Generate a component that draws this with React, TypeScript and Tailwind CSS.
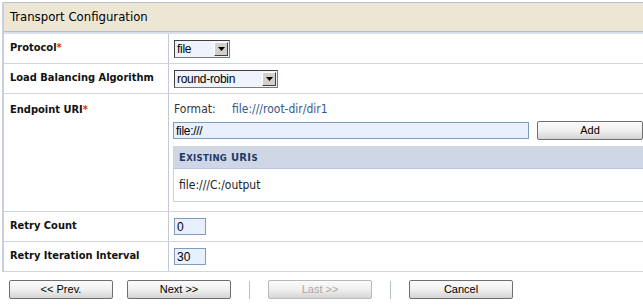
import React from "react";

const labelFont = { fontFamily: "'DejaVu Sans Condensed', 'DejaVu Sans', Tahoma, sans-serif", fontStretch: "condensed" as const };
const plainFont = { fontFamily: "'DejaVu Sans', Tahoma, sans-serif" };
const arial = { fontFamily: "'Liberation Sans', Arial, sans-serif" };

function Select({ value, width }: { value: string; width: string }) {
  return (
    <div
      className={`flex items-center h-[18px] ${width} border border-[#7a7a7a] border-t-[#404040] border-l-[#404040] bg-[#eef3fc]`}
    >
      <span className="flex-1 pl-[2px] text-[12px] leading-none text-black tracking-[-0.3px]" style={arial}>
        {value}
      </span>
      <span className="w-[14px] h-[14px] mr-[1px] bg-[#d4d0c8] border border-[#ffffff] border-r-[#404040] border-b-[#404040] flex items-center justify-center">
        <svg width="7" height="4" viewBox="0 0 7 4">
          <polygon points="0,0 7,0 3.5,4" fill="#000" />
        </svg>
      </span>
    </div>
  );
}

function Btn({ children, disabled, width = "w-[104px]" }: { children: React.ReactNode; disabled?: boolean; width?: string }) {
  return (
    <div
      className={`${width} h-[19px] flex items-center justify-center rounded-[2px] border text-[11px] bg-gradient-to-b from-[#fbfbfb] via-[#f0f0f0] to-[#d4d4d4] ${
        disabled ? "border-[#b8b8b8] text-[#a8a8a8]" : "border-[#6f6f6f] text-black"
      }`}
      style={arial}
    >
      {children}
    </div>
  );
}

function Row({ label, req, children, h, alignTop }: { label: string; req?: boolean; children: React.ReactNode; h: string; alignTop?: boolean }) {
  return (
    <div className={`flex ${h} border-b border-[#cfd6d8]`}>
      <div className={`w-[165px] shrink-0 border-r border-[#c3cad6] pl-[6px] flex ${alignTop ? "items-start pt-[8px]" : "items-center"}`}>
        <span className="text-[11px] font-bold text-[#111] whitespace-nowrap" style={labelFont}>
          {label}
          {req && <span className="text-[#e0301e]">*</span>}
        </span>
      </div>
      <div className="flex-1 min-w-0">{children}</div>
    </div>
  );
}

export default function App() {
  return (
    <div className="w-[643px] h-[305px] bg-white overflow-hidden relative">
      <div className="ml-[2px] mt-[2px] border-l-2 border-[#c9d0dc]">
        <div className="h-[29px] bg-[#ede6d5] border-t border-[#b8bfcc] flex items-center pl-[6px]">
          <span className="text-[13px] text-black" style={labelFont}>
            Transport Configuration
          </span>
        </div>
        <div className="h-[3px] border-t border-[#b3bbcd] bg-[#d8deea]" />
        <Row label="Protocol" req h="h-[30px]">
          <div className="h-full flex items-center pl-[5px]">
            <Select value="file" width="w-[56px]" />
          </div>
        </Row>
        <Row label="Load Balancing Algorithm" h="h-[30px]">
          <div className="h-full flex items-center pl-[5px]">
            <Select value="round-robin" width="w-[104px]" />
          </div>
        </Row>
        <Row label="Endpoint URI" req h="h-[118px]" alignTop>
          <div className="pl-[4px] pt-[7px]">
            <div className="flex items-center h-[16px] text-[12px]" style={labelFont}>
              <span className="pl-[1px] w-[59px] text-[#333]">Format:</span>
              <span className="text-[#34598a]">file:///root-dir/dir1</span>
            </div>
            <div className="flex items-center mt-[4px]">
              <div className="w-[357px] h-[17px] border border-[#7f9db9] bg-[#e8f0fd] flex items-center pl-[2px] text-[12px] tracking-[-0.3px]" style={arial}>
                file:///
              </div>
              <div className="ml-[8px]">
                <Btn width="w-[106px]">Add</Btn>
              </div>
            </div>
            <div className="mt-[6px] border-l border-[#c5d2e6] border-b border-[#b8c9e4]">
              <div className="h-[23px] bg-[#cfd7e6] border-b border-[#b7c7e2] flex items-center pl-[5px]">
                <span className="text-[10px] font-bold text-[#1f3a66] tracking-[0.3px]" style={plainFont}>
                  E<span className="text-[8.5px]">XISTING</span> URI<span className="text-[8.5px]">S</span>
                </span>
              </div>
              <div className="h-[32px] flex items-center pl-[5px] text-[12px] text-[#222]" style={labelFont}>
                file:///C:/output
              </div>
            </div>
          </div>
        </Row>
        <Row label="Retry Count" h="h-[30px]">
          <div className="h-full flex items-center pl-[5px]">
            <div className="w-[32px] h-[17px] border border-[#7f9db9] bg-[#e8f0fd] flex items-center pl-[2px] text-[12px]" style={arial}>
              0
            </div>
          </div>
        </Row>
        <Row label="Retry Iteration Interval" h="h-[30px]">
          <div className="h-full flex items-center pl-[5px]">
            <div className="w-[32px] h-[17px] border border-[#7f9db9] bg-[#e8f0fd] flex items-center pl-[2px] text-[12px]" style={arial}>
              30
            </div>
          </div>
        </Row>
      </div>
      <div className="flex items-center mt-[8px] pl-[9px]">
        <Btn>&lt;&lt; Prev.</Btn>
        <div className="ml-[14px]">
          <Btn>Next &gt;&gt;</Btn>
        </div>
        <div className="w-px h-[18px] bg-[#b5c0d0] mx-[18px]" />
        <Btn disabled>Last &gt;&gt;</Btn>
        <div className="w-px h-[18px] bg-[#b5c0d0] mx-[18px]" />
        <Btn>Cancel</Btn>
      </div>
    </div>
  );
}
